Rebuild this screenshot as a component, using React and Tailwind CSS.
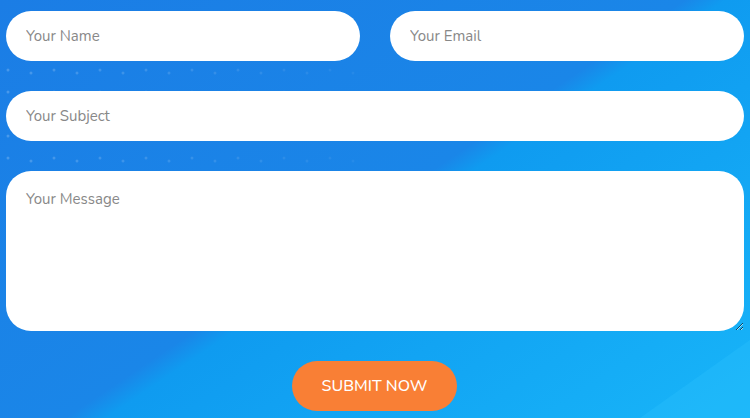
import React from "react";

const field =
  "h-[50px] rounded-full bg-white pl-5 text-[15px] text-[#555] placeholder:text-[#888] outline-none font-['Nunito','Lato','Open_Sans',sans-serif]";

export default function App() {
  return (
    <div className="relative w-[750px] h-[418px] overflow-hidden bg-[linear-gradient(146deg,#1b7de5_0%,#1a86e8_50%,#0f9bf0_53%,#15adf6_85%,#18b5f8_100%)] font-['Nunito','Lato','Open_Sans',sans-serif]">
      <svg className="absolute inset-0 pointer-events-none" width="750" height="418">
        <polygon points="750,340 750,418 640,418" fill="#2ec4ff" opacity="0.3" />
        {Array.from({ length: 5 }).map((_, r) =>
          Array.from({ length: 16 }).map((_, c) => (
            <circle
              key={r + "-" + c}
              cx={8 + c * 23}
              cy={70 + r * 22 + (c % 2) * 3}
              r="1.5"
              fill="#ffffff"
              opacity={Math.max(0.04, 0.2 - c * 0.01)}
            />
          ))
        )}
      </svg>
      <form className="relative flex flex-col gap-[30px] px-[6px] pt-[11px]">
        <div className="flex gap-[30px]">
          <input placeholder="Your Name" className={field + " w-[354px]"} />
          <input placeholder="Your Email" className={field + " w-[354px]"} />
        </div>
        <input placeholder="Your Subject" className={field + " w-[738px]"} />
        <textarea
          placeholder="Your Message"
          className="block w-[738px] h-[160px] rounded-[25px] bg-white pl-5 pt-[17px] text-[15px] text-[#555] placeholder:text-[#888] outline-none font-['Nunito','Lato','Open_Sans',sans-serif]"
        />
        <div className="flex justify-center">
          <button
            type="button"
            className="w-[165px] h-[50px] rounded-full bg-[#f97f35] text-white text-[16px] font-medium uppercase ml-[-1px] font-['Nunito','Lato','Open_Sans',sans-serif]"
          >
            Submit Now
          </button>
        </div>
      </form>
    </div>
  );
}
